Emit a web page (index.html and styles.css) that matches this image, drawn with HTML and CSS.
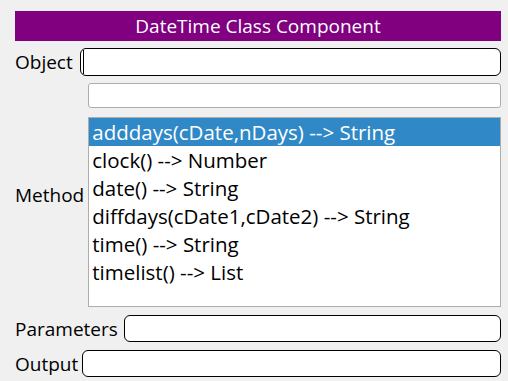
FILE: index.html
```html
<!DOCTYPE html>
<html lang="en">
<head>
    <meta charset="UTF-8">
    <meta name="viewport" content="width=device-width, initial-scale=1.0">
    <title>DateTime Class Component</title>
    <link rel="stylesheet" href="styles.css">
</head>
<body>
<div class="title">DateTime Class Component</div>

<div class="row row-object">
    <label>Object</label>
    <div class="field"><span class="caret"></span></div>
</div>

<div class="row row-method">
    <label>Method</label>
    <div class="method-box">
        <div class="filter"></div>
        <ul class="list">
            <li class="selected">adddays(cDate,nDays) --&gt; String</li>
            <li>clock() --&gt; Number</li>
            <li>date() --&gt; String</li>
            <li>diffdays(cDate1,cDate2) --&gt; String</li>
            <li>time() --&gt; String</li>
            <li>timelist() --&gt; List</li>
        </ul>
    </div>
</div>

<div class="row row-params">
    <label>Parameters</label>
    <div class="field"></div>
</div>

<div class="row row-output">
    <label>Output</label>
    <div class="field"></div>
</div>
</body>
</html>
```

FILE: styles.css
```css
body {
    font-family: 'Open Sans', sans-serif;
    font-size: 19px;
    margin: 0;
    padding: 11px 7px 0 15px;
    background-color: #f0f0f0;
    color: #000;
}
.title {
    background-color: #800080;
    color: #fff;
    height: 30px;
    line-height: 30px;
    text-align: center;
}
.row {
    display: flex;
    align-items: center;
    gap: 7px;
}
.row label {
    white-space: nowrap;
}
.field {
    flex: 1;
    height: 26px;
    background-color: #fff;
    border: 1px solid #000;
    border-radius: 6px;
    display: flex;
    align-items: center;
}
.caret {
    width: 1px;
    height: 24px;
    margin-left: 2px;
    background-color: #000;
}
.row-object {
    margin-top: 7px;
    height: 28px;
}
.row-method {
    margin-top: 7px;
    gap: 4px;
}
.method-box {
    flex: 1;
}
.filter {
    height: 23px;
    background-color: #fff;
    border: 1px solid #adadad;
    border-radius: 3px;
}
.list {
    list-style: none;
    margin: 9px 0 0 0;
    padding: 0;
    height: 188px;
    background-color: #fff;
    border: 1px solid #adadad;
    font-size: 20.5px;
}
.list li {
    height: 28px;
    line-height: 28px;
    padding-left: 3px;
    white-space: nowrap;
}
.list li.selected {
    background-color: #3089c6;
    color: #fff;
}
.row-params {
    margin-top: 8px;
    height: 27px;
    gap: 6px;
}
.row-params .field,
.row-output .field {
    height: 25px;
}
.row-output {
    margin-top: 8px;
    height: 27px;
    gap: 4px;
}
```
